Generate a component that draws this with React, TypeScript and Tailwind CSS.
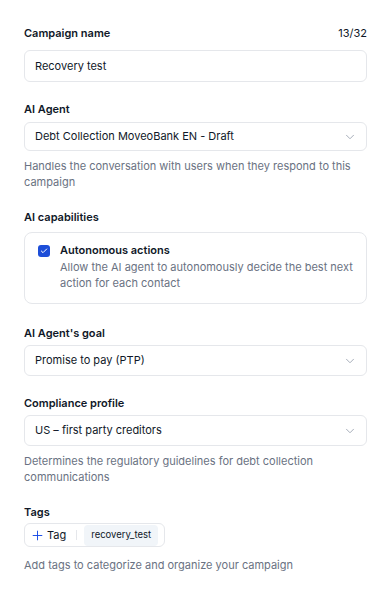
import { ChevronDown, Plus, Check } from 'lucide-react'

function Label({ children, right, mb = 'mb-[4px]' }: { children: React.ReactNode; right?: React.ReactNode; mb?: string }) {
  return (
    <div className={`flex items-center justify-between ${mb}`}>
      <span className="text-[11px] font-semibold leading-4 text-gray-900">{children}</span>
      {right && <span className="text-[11px] leading-4 text-gray-900">{right}</span>}
    </div>
  )
}

function Select({ value, h = 'h-[31px]' }: { value: string; h?: string }) {
  return (
    <div className={`flex items-center justify-between ${h} rounded-md border border-gray-200 bg-white pl-[10px] pr-[9px]`}>
      <span className="text-[11px] text-gray-900">{value}</span>
      <ChevronDown className="h-[14px] w-[14px] text-gray-400" strokeWidth={1.5} />
    </div>
  )
}

function Help({ children, mt = 'mt-[7px]' }: { children: React.ReactNode; mt?: string }) {
  return <p className={`${mt} text-[11px] leading-4 text-gray-500`}>{children}</p>
}

export default function App() {
  return (
    <div className="min-h-screen bg-white px-6 pt-[25px] font-['Inter',sans-serif]">
      {/* Campaign name */}
      <div>
        <Label right="13/32" mb="mb-[9px]">Campaign name</Label>
        <div className="flex h-8 items-center rounded-md border border-gray-200 px-[10px]">
          <span className="text-[11px] text-gray-900">Recovery test</span>
        </div>
      </div>

      {/* AI Agent */}
      <div className="mt-[19px]">
        <Label mb="mb-[5px]">AI Agent</Label>
        <Select value="Debt Collection MoveoBank EN - Draft" h="h-[29px]" />
        <Help>Handles the conversation with users when they respond to this campaign</Help>
      </div>

      {/* AI capabilities */}
      <div className="mt-[19px]">
        <Label mb="mb-[7px]">AI capabilities</Label>
        <div className="flex gap-[10px] rounded-lg border border-gray-200 pl-[13px] pr-[12px] pt-[9px] pb-[12px]">
          <div className="mt-[3px] flex h-[12px] w-[12px] shrink-0 items-center justify-center rounded-[3px] bg-[#1d4ed8]">
            <Check className="h-[8px] w-[8px] text-white" strokeWidth={3} />
          </div>
          <div>
            <div className="text-[11px] font-semibold leading-4 text-gray-900">Autonomous actions</div>
            <p className="mt-[1px] text-[11px] leading-4 text-gray-500">
              Allow the AI agent to autonomously decide the best next action for each contact
            </p>
          </div>
        </div>
      </div>

      {/* Goal */}
      <div className="mt-[21px]">
        <Label>AI Agent's goal</Label>
        <Select value="Promise to pay (PTP)" />
      </div>

      {/* Compliance */}
      <div className="mt-[19px]">
        <Label>Compliance profile</Label>
        <Select value="US – first party creditors" />
        <Help>Determines the regulatory guidelines for debt collection communications</Help>
      </div>

      {/* Tags */}
      <div className="mt-[19px]">
        <Label mb="mb-[3px]">Tags</Label>
        <div className="inline-flex h-6 items-center rounded-md border border-gray-200 pl-[5px] pr-[6px]">
          <Plus className="h-[15px] w-[15px] text-blue-700" strokeWidth={1.5} />
          <span className="ml-[2px] text-[11px] leading-4 text-gray-900">Tag</span>
          <span className="ml-[10px] mr-[7px] h-[10px] w-px bg-gray-200" />
          <span className="flex h-[21px] items-center rounded bg-slate-100 px-[7px] text-[9.5px] text-gray-900">recovery_test</span>
        </div>
        <Help mt="mt-[8px]">Add tags to categorize and organize your campaign</Help>
      </div>
    </div>
  )
}
